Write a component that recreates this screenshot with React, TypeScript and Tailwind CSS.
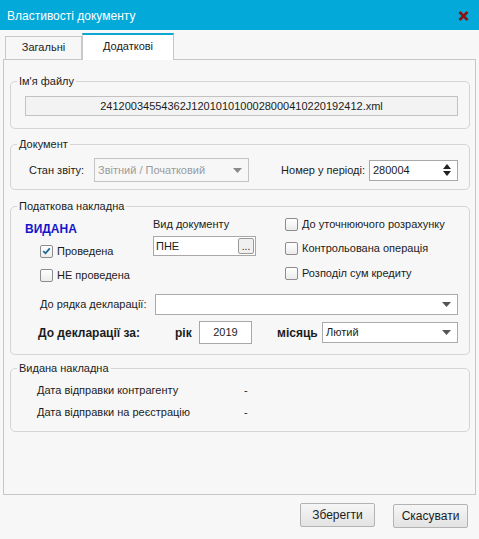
import React from "react";

function Arrow({ color = "#555" }: { color?: string }) {
  return (
    <svg width="9" height="5" viewBox="0 0 9 5">
      <polygon points="0,0 9,0 4.5,5" fill={color} />
    </svg>
  );
}

function CheckBox({ checked, label }: { checked?: boolean; label: string }) {
  return (
    <label className="flex items-center h-[16px]">
      <span className="w-[13px] h-[13px] border border-[#8d8d8d] rounded-[2px] bg-gradient-to-b from-white to-[#ececec] flex items-center justify-center">
        {checked && (
          <svg width="9" height="8" viewBox="0 0 9 8">
            <path d="M1.2 4.2 L3.5 6.3 L7.8 1.4" stroke="#1d6a93" strokeWidth="1.8" fill="none" />
          </svg>
        )}
      </span>
      <span className="ml-[4px]">{label}</span>
    </label>
  );
}

function Select({ value, disabled, className = "" }: { value: string; disabled?: boolean; className?: string }) {
  return (
    <div
      className={`flex items-center border pl-[3px] pr-[6px] ${
        disabled ? "bg-[#f7f7f7] text-[#9b9b9b] border-[#c4c4c4]" : "bg-white border-[#aaaaaa]"
      } ${className}`}
    >
      <span className="flex-1">{value}</span>
      <Arrow color={disabled ? "#8a8a8a" : "#555"} />
    </div>
  );
}

function Group({
  title,
  className = "",
  bodyClassName = "",
  children,
}: {
  title: string;
  className?: string;
  bodyClassName?: string;
  children: React.ReactNode;
}) {
  return (
    <fieldset className={`border border-[#d5d5d5] rounded-[5px] ${className}`}>
      <legend className="ml-[6px] px-[2px] leading-[15px]">{title}</legend>
      <div className={bodyClassName}>{children}</div>
    </fieldset>
  );
}

export default function App() {
  return (
    <div className="w-[479px] h-[539px] bg-[#f7f7f7] font-['Liberation_Sans',Arial,sans-serif] text-[11px] text-[#1c1c1c] flex flex-col overflow-hidden">
      {/* title bar */}
      <div className="h-[30px] bg-[#02a9d9] flex items-center justify-between pl-[7px] pr-[10px]">
        <span className="text-white text-[12px] pt-[2px]">Властивості документу</span>
        <svg width="11" height="10" viewBox="0 0 11 10" className="mt-[2px]">
          <path d="M1.5 1 L9.5 9 M9.5 1 L1.5 9" stroke="#8a1414" strokeWidth="2.6" />
        </svg>
      </div>

      {/* tabs */}
      <div className="h-[29px] flex items-end pl-[5px]">
        <div className="w-[77px] h-[23px] border border-b-0 border-[#c8c8c8] flex items-center justify-center pb-[1px]">
          Загальні
        </div>
        <div className="relative z-10 -mb-px w-[92px] h-[27px] bg-white border-x border-[#c8c8c8] border-t-2 border-t-[#0aa6d6] flex items-start justify-center pt-[3px]">
          Додаткові
        </div>
      </div>

      {/* tab page */}
      <div className="ml-[3px] w-[473px] h-[436px] border border-[#c6c6c6] pl-[6px] pr-[5px]">
        <Group title="Ім'я файлу" className="mt-[14px]" bodyClassName="pl-[14px] pr-[11px] pb-[12px]">
          <div className="mt-[7px] h-[20px] border border-[#c2c2c2] bg-[#f3f3f3] flex items-center justify-center">
            24120034554362J1201010100028000410220192412.xml
          </div>
        </Group>

        <Group title="Документ" className="mt-[8px]" bodyClassName="pl-[18px] pr-[11px] pb-[7px]">
          <div className="mt-[6px] h-[24px] flex items-center">
            <span className="w-[65px]">Стан звіту:</span>
            <Select value="Звітний / Початковий" disabled className="w-[155px] h-[24px]" />
            <span className="ml-auto">Номер у періоді:</span>
            <div className="ml-[4px] w-[89px] h-[21px] border border-[#a8a8a8] bg-white flex items-center pl-[3px] pr-[6px]">
              <span className="flex-1">280004</span>
              <div className="flex flex-col gap-[2px]">
                <svg width="8" height="5" viewBox="0 0 8 5">
                  <polygon points="0,5 8,5 4,0" fill="#222" />
                </svg>
                <svg width="8" height="5" viewBox="0 0 8 5">
                  <polygon points="0,0 8,0 4,5" fill="#222" />
                </svg>
              </div>
            </div>
          </div>
        </Group>

        <Group title="Податкова накладна" className="mt-[9px]" bodyClassName="pl-[14px] pr-[11px] pb-[10px]">
          <div className="flex">
            <div className="w-[128px] flex flex-col">
              <div className="mt-[7px] leading-[16px] text-[12px] font-bold text-[#1414cc]">ВИДАНА</div>
              <div className="mt-[6px] ml-[15px]">
                <CheckBox checked label="Проведена" />
              </div>
              <div className="mt-[8px] ml-[15px]">
                <CheckBox label="НЕ проведена" />
              </div>
            </div>
            <div className="w-[132px] flex flex-col">
              <div className="mt-[3px] leading-[14px]">Вид документу</div>
              <div className="mt-[5px] w-[103px] h-[20px] border border-[#a8a8a8] bg-white flex items-center pl-[2px] pr-[1px]">
                <span className="flex-1">ПНЕ</span>
                <div className="w-[16px] h-[16px] border border-[#9a9a9a] rounded-[2px] bg-[#f0f0f0] flex items-end justify-center leading-[12px] text-[10px]">
                  ...
                </div>
              </div>
            </div>
            <div className="flex flex-col">
              <div className="mt-[2px]">
                <CheckBox label="До уточнюючого розрахунку" />
              </div>
              <div className="mt-[8px]">
                <CheckBox label="Контрольована операція" />
              </div>
              <div className="mt-[9px]">
                <CheckBox label="Розподіл сум кредиту" />
              </div>
            </div>
          </div>

          <div className="mt-[10px] h-[22px] flex items-center">
            <span className="ml-[15px] w-[115px]">До рядка декларації:</span>
            <Select value="" className="flex-1 h-[21px]" />
          </div>

          <div className="mt-[6px] h-[23px] flex items-center font-bold text-[12px]">
            <span className="ml-[13px] w-[137px]">До декларації за:</span>
            <span className="w-[24px]">рік</span>
            <div className="w-[53px] h-[23px] border border-[#a8a8a8] bg-white flex items-center justify-center font-normal text-[11px]">
              2019
            </div>
            <span className="ml-[25px] w-[45px]">місяць</span>
            <Select value="Лютий" className="flex-1 h-[21px] font-normal text-[11px]" />
          </div>
        </Group>

        <Group title="Видана накладна" className="mt-[6px]" bodyClassName="pl-[26px] pb-[11px]">
          <div className="mt-[6px] h-[16px] flex items-center">
            <span className="w-[207px]">Дата відправки контрагенту</span>
            <span>-</span>
          </div>
          <div className="mt-[6px] h-[16px] flex items-center">
            <span className="w-[207px]">Дата відправки на реєстрацію</span>
            <span>-</span>
          </div>
        </Group>
      </div>

      {/* dialog buttons */}
      <div className="mt-[8px] flex justify-end gap-[18px] pr-[11px]">
        <button className="w-[75px] h-[24px] border border-[#b3b3b3] rounded-[2px] bg-gradient-to-b from-[#f6f6f6] to-[#e3e3e3] text-[12px]">
          Зберегти
        </button>
        <button className="mt-[1px] w-[75px] h-[24px] border border-[#b3b3b3] rounded-[2px] bg-gradient-to-b from-[#f6f6f6] to-[#e3e3e3] text-[12px]">
          Скасувати
        </button>
      </div>
    </div>
  );
}
